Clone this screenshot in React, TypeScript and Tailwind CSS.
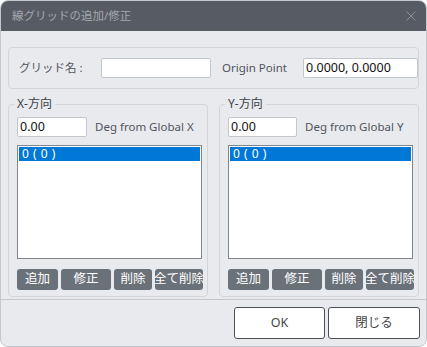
import React from "react";

const font = "font-['Noto_Sans','Noto_Sans_CJK_JP',sans-serif]";

function Btn({ w, children }: { w: string; children: React.ReactNode }) {
  return (
    <div
      className={`${w} h-[21px] rounded-[3px] bg-[#6b7179] text-white text-[12.5px] leading-none flex items-center justify-center whitespace-nowrap overflow-visible`}
    >
      {children}
    </div>
  );
}

function Group({ label, deg, inputW }: { label: string; deg: string; inputW: string }) {
  return (
    <div className="relative w-[200px] h-[193px] border border-[#d3d5d9] rounded-[4px] pl-[8px] pt-[12px]">
      <span className="absolute left-[5px] top-[-9px] px-[3px] bg-[#e9eaee] text-[12px] leading-[16px] text-[#3d4147]">
        {label}
      </span>
      <div className="flex items-center">
        <div className={`${inputW} h-[20px] bg-white border border-[#c3c6cb] rounded-[2px] px-[2px] text-[12.5px] leading-[18px] text-[#111]`}>
          0.00
        </div>
        <span className="ml-[8px] text-[11.5px] text-[#50555c]">{deg}</span>
      </div>
      <div className="mt-[8px] w-[185px] h-[114px] bg-white border border-[#7f868e] p-[1px]">
        <div className="h-[14px] bg-[#0078d7] text-white text-[12px] leading-[14px] pl-[3px] tracking-[0.5px] whitespace-pre">0 ( 0 )</div>
      </div>
      <div className="mt-[10px] flex">
        <Btn w="w-[41px]">追加</Btn>
        <div className="w-[3px]" />
        <Btn w="w-[50px]">修正</Btn>
        <div className="w-[3px]" />
        <Btn w="w-[38px]">削除</Btn>
        <div className="w-[3px]" />
        <Btn w="w-[48px]">全て削除</Btn>
      </div>
    </div>
  );
}

export default function App() {
  return (
    <div className={`w-[427px] h-[347px] bg-white ${font}`}>
      <div className="w-full h-full rounded-[8px] overflow-hidden bg-[#e9eaee] border border-[#c4c7cc] flex flex-col">
        <div className="h-[30px] shrink-0 bg-[#575c64] flex items-center pl-[11px] pr-[10px]">
          <span className="text-[11.5px] text-[#a3a7ad]">線グリッドの追加/修正</span>
          <svg className="ml-auto" width="10" height="10" viewBox="0 0 10 10">
            <path d="M0.5 0.5 L9.5 9.5 M9.5 0.5 L0.5 9.5" stroke="#8c9097" strokeWidth="1" />
          </svg>
        </div>
        <div className="px-[7px] flex-1">
          <div className="mt-[16px] w-[411px] h-[42px] border border-[#d3d5d9] rounded-[4px] flex items-center pl-[10px]">
            <span className="w-[82px] text-[11.5px] text-[#50555c]">グリッド名 :</span>
            <div className="w-[110px] h-[20px] bg-white border border-[#c3c6cb] rounded-[2px]" />
            <span className="ml-[11px] w-[81px] text-[11.5px] text-[#50555c]">Origin Point</span>
            <div className="w-[115px] h-[20px] bg-white border border-[#c3c6cb] rounded-[2px] px-[2px] text-[12.5px] leading-[18px] text-[#111]">
              0.0000, 0.0000
            </div>
          </div>
          <div className="mt-[15px] flex gap-[11px]">
            <Group label="X-方向" deg="Deg from Global X" inputW="w-[70px]" />
            <Group label="Y-方向" deg="Deg from Global Y" inputW="w-[69px]" />
          </div>
        </div>
        <div className="h-[47px] shrink-0 border-t border-[#c2c5ca] flex justify-end items-start pt-[7px] pr-[6px] gap-[3px]">
          <div className="w-[91px] h-[32px] bg-white border border-[#4b4f56] rounded-[3px] flex items-center justify-center text-[12.5px] text-[#444]">
            OK
          </div>
          <div className="w-[92px] h-[32px] bg-white border border-[#4b4f56] rounded-[3px] flex items-center justify-center text-[12.5px] text-[#444]">
            閉じる
          </div>
        </div>
      </div>
    </div>
  );
}
